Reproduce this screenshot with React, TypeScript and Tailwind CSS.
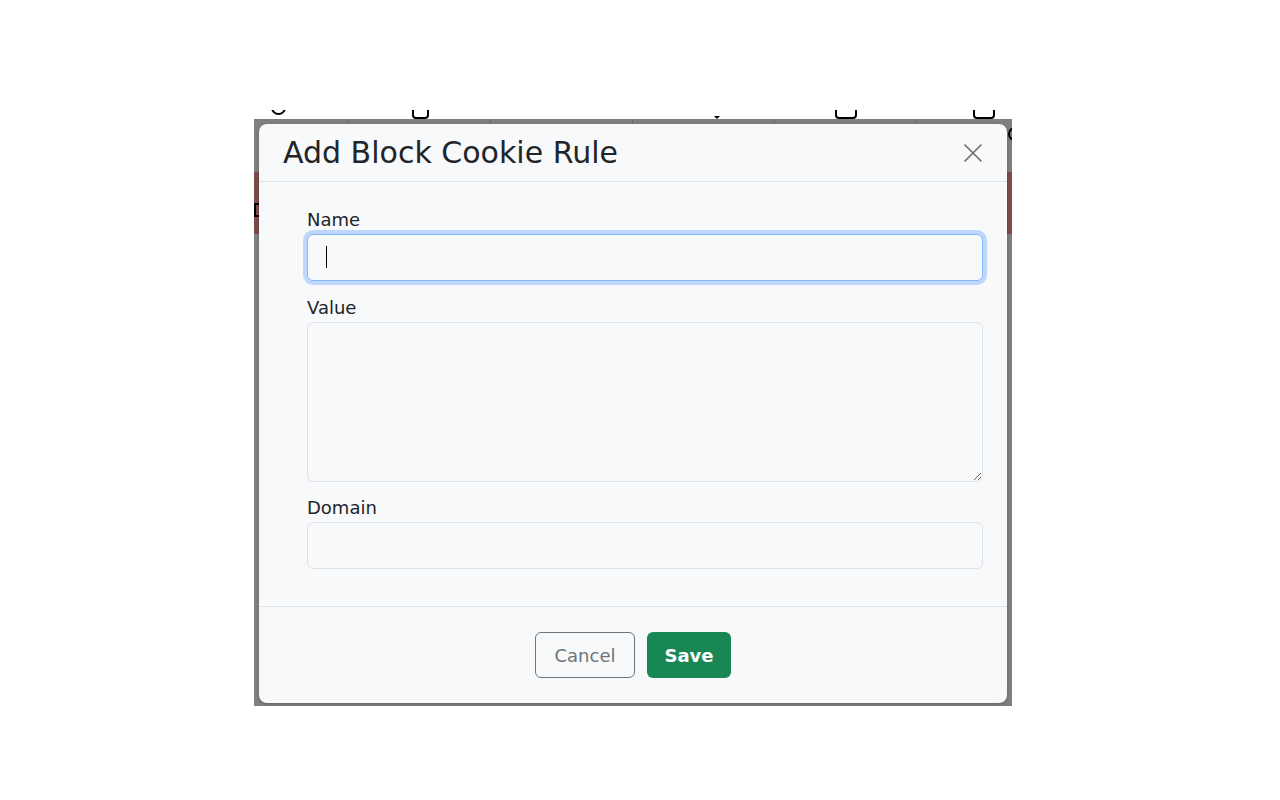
import { useState } from "react";

const headerCols = [0, 1, 2, 3, 4, 5];

function TopIcons() {
  // bottoms of the page's toolbar icons, peeking out above the popup
  return (
    <div className="ml-[207px] mt-[110px] flex h-[9px] overflow-hidden">
      <div className="flex w-[142px] items-end justify-center">
        <span className="mb-[4px] h-[15px] w-[15px] shrink-0 rounded-full border-2 border-black" />
      </div>
      <div className="flex w-[142px] items-end justify-center">
        <span className="h-[14px] w-[17px] shrink-0 rounded-[4px] border-2 border-black" />
      </div>
      <div className="w-[142px]" />
      <div className="flex w-[142px] items-end justify-center pl-[26px]">
        <span className="h-0 w-0 border-x-[3px] border-t-[3px] border-x-transparent border-t-black" />
      </div>
      <div className="flex w-[142px] items-end justify-center">
        <span className="h-[14px] w-[22px] shrink-0 rounded-[4px] border-2 border-black" />
      </div>
      <div className="flex w-[142px] items-end justify-center pr-[8px]">
        <span className="h-[14px] w-[22px] shrink-0 rounded-[4px] border-2 border-black" />
      </div>
    </div>
  );
}

function CloseIcon() {
  return (
    <svg width="20" height="20" viewBox="0 0 20 20" fill="none" stroke="currentColor" strokeWidth="1.7" strokeLinecap="round">
      <path d="M2 2 L18 18 M18 2 L2 18" />
    </svg>
  );
}

function Field({ label, children, className }: { label: string; children: React.ReactNode; className?: string }) {
  return (
    <div className={className}>
      <label className="mb-[1px] block text-[18px] leading-[27px] text-[#212529]">{label}</label>
      {children}
    </div>
  );
}

function CookieRuleModal() {
  const [name, setName] = useState("");
  const [value, setValue] = useState("");
  const [domain, setDomain] = useState("");

  return (
    <div
      role="dialog"
      aria-modal="true"
      className="absolute left-[5px] top-[5px] flex h-[579px] w-[748px] flex-col rounded-[8px] bg-[#f8f9fa] shadow-[0_1px_3px_rgba(0,0,0,0.25)]"
    >
      <div className="flex h-[58px] shrink-0 items-center justify-between border-b border-[#dee2e6] pl-[24px] pr-[24px]">
        <h5 className="text-[30px] leading-[45px] text-[#212529]">Add Block Cookie Rule</h5>
        <button type="button" aria-label="Close" className="text-[#6f7072]">
          <CloseIcon />
        </button>
      </div>

      <form className="flex flex-1 flex-col pl-[48px] pr-[24px] pt-[24px]" onSubmit={(event) => event.preventDefault()}>
        <Field label="Name">
          <div className="relative">
            <input
              type="text"
              value={name}
              onChange={(event) => setName(event.target.value)}
              className="block h-[47px] w-full rounded-[6px] border border-[#86b7fe] bg-[#f8f9fa] px-[18px] text-[18px] text-[#212529] outline-none ring-[4px] ring-[#bfd7fb]"
            />
            {name === "" ? <span className="absolute left-[19px] top-[12px] h-[22px] w-px bg-black" /> : null}
          </div>
        </Field>

        <Field label="Value" className="mt-[13px]">
          <textarea
            value={value}
            onChange={(event) => setValue(event.target.value)}
            className="block h-[160px] w-full rounded-[6px] border border-[#dee2e6] bg-[#f8f9fa] px-[18px] py-[9px] text-[18px] text-[#212529] outline-none"
          />
        </Field>

        <Field label="Domain" className="mt-[12px]">
          <input
            type="text"
            value={domain}
            onChange={(event) => setDomain(event.target.value)}
            className="block h-[47px] w-full rounded-[6px] border border-[#dee2e6] bg-[#f8f9fa] px-[18px] text-[18px] text-[#212529] outline-none"
          />
        </Field>
      </form>

      <div className="flex h-[97px] shrink-0 items-center justify-center gap-[12px] border-t border-[#dee2e6]">
        <button
          type="button"
          className="h-[46px] w-[100px] rounded-[6px] border border-[#6c757d] text-[18px] text-[#6c757d]"
        >
          Cancel
        </button>
        <button type="button" className="h-[46px] w-[84px] rounded-[6px] bg-[#198754] text-[18px] font-bold text-white">
          Save
        </button>
      </div>
    </div>
  );
}

export default function App() {
  return (
    <div className="h-[800px] w-full overflow-hidden bg-white font-['DejaVu_Sans',sans-serif]">
      <TopIcons />

      <div className="relative ml-[254px] h-[587px] w-[758px] overflow-hidden bg-white">
        {/* table behind the backdrop */}
        <div className="-ml-[47px] flex w-[852px]">
          {headerCols.map((col) => (
            <div key={col} className="h-[53px] w-[142px] shrink-0 border-r border-[#d6d6d6]">
              {col === 5 ? (
                <div className="pl-[91px] pt-[8px]">
                  <span className="block h-[14px] w-[14px] rounded-full border-2 border-black" />
                </div>
              ) : null}
            </div>
          ))}
        </div>
        <div className="flex h-[62px] items-start bg-[#fd9797] pt-[31px]">
          <span className="h-[14px] w-[14px] border-2 border-black" />
        </div>

        <div className="absolute inset-0 bg-black/50" />

        <CookieRuleModal />
      </div>
    </div>
  );
}
